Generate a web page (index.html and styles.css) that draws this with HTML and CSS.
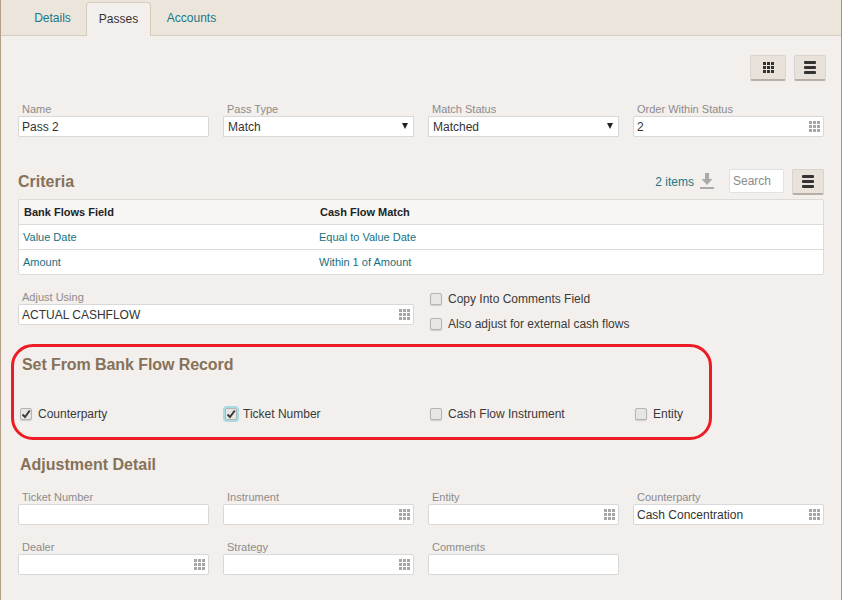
FILE: index.html
```html
<!DOCTYPE html>
<html lang="en">
<head>
<meta charset="utf-8">
<title>Passes</title>
<link rel="stylesheet" href="styles.css">
</head>
<body>
<svg class="defs" width="0" height="0" aria-hidden="true">
  <defs>
    <g id="grid">
      <rect x="0" y="0" width="3" height="3"/><rect x="4" y="0" width="3" height="3"/><rect x="8" y="0" width="3" height="3"/>
      <rect x="0" y="4" width="3" height="3"/><rect x="4" y="4" width="3" height="3"/><rect x="8" y="4" width="3" height="3"/>
      <rect x="0" y="8" width="3" height="3"/><rect x="4" y="8" width="3" height="3"/><rect x="8" y="8" width="3" height="3"/>
    </g>
    <g id="menu">
      <rect x="0" y="0" width="12" height="3" rx="1"/><rect x="0" y="5" width="12" height="3" rx="1"/><rect x="0" y="10" width="12" height="3" rx="1"/>
    </g>
  </defs>
</svg>
<div class="app">
  <nav class="tabs">
    <a class="tab">Details</a>
    <a class="tab active">Passes</a>
    <a class="tab">Accounts</a>
  </nav>
  <main class="content">
    <div class="toolbar">
      <button class="btn btn-wide"><svg width="11" height="11"><use href="#grid"/></svg></button>
      <button class="btn"><svg width="12" height="13"><use href="#menu"/></svg></button>
    </div>

    <div class="grid pass-row">
      <div class="field"><label>Name</label><div class="input">Pass 2</div></div>
      <div class="field"><label>Pass Type</label><div class="input select">Match<span class="caret"></span></div></div>
      <div class="field"><label>Match Status</label><div class="input select">Matched<span class="caret"></span></div></div>
      <div class="field"><label>Order Within Status</label><div class="input">2<svg class="lookup" width="11" height="11"><use href="#grid"/></svg></div></div>
    </div>

    <div class="criteria-head">
      <h2 class="heading criteria-title">Criteria</h2>
      <div class="criteria-tools">
        <span class="count">2 items</span>
        <svg class="download" width="14" height="16" viewBox="0 0 14 16"><path d="M5 0h4v6h3.500L7 12 1.500 6H5z"/><rect y="14" width="14" height="2"/></svg>
        <div class="search">Search</div>
        <button class="btn"><svg width="12" height="13"><use href="#menu"/></svg></button>
      </div>
    </div>

    <div class="table">
      <div class="row head"><span class="col-a">Bank Flows Field</span><span>Cash Flow Match</span></div>
      <div class="row"><span class="col-a">Value Date</span><span>Equal to Value Date</span></div>
      <div class="row"><span class="col-a">Amount</span><span>Within 1 of Amount</span></div>
    </div>

    <div class="adjust">
      <div class="field adjust-field"><label>Adjust Using</label><div class="input">ACTUAL CASHFLOW<svg class="lookup" width="11" height="11"><use href="#grid"/></svg></div></div>
      <div class="checks">
        <div class="check"><span class="box"></span>Copy Into Comments Field</div>
        <div class="check"><span class="box"></span>Also adjust for external cash flows</div>
      </div>
    </div>

    <section class="set-from">
      <div class="ring"></div>
      <h2 class="heading set-title">Set From Bank Flow Record</h2>
      <div class="grid">
        <div class="check"><span class="box on"><svg width="10" height="10" viewBox="0 0 10 10"><path d="M1.500 5.500L4 8l4.800-6.500" /></svg></span>Counterparty</div>
        <div class="check"><span class="box on focus"><svg width="10" height="10" viewBox="0 0 10 10"><path d="M1.500 5.500L4 8l4.800-6.500" /></svg></span>Ticket Number</div>
        <div class="check"><span class="box"></span>Cash Flow Instrument</div>
        <div class="check"><span class="box"></span>Entity</div>
      </div>
    </section>

    <h2 class="heading adj-title">Adjustment Detail</h2>
    <div class="grid adj-grid">
      <div class="field"><label>Ticket Number</label><div class="input"></div></div>
      <div class="field"><label>Instrument</label><div class="input"><svg class="lookup" width="11" height="11"><use href="#grid"/></svg></div></div>
      <div class="field"><label>Entity</label><div class="input"><svg class="lookup" width="11" height="11"><use href="#grid"/></svg></div></div>
      <div class="field"><label>Counterparty</label><div class="input">Cash Concentration<svg class="lookup" width="11" height="11"><use href="#grid"/></svg></div></div>
      <div class="field"><label>Dealer</label><div class="input"><svg class="lookup" width="11" height="11"><use href="#grid"/></svg></div></div>
      <div class="field"><label>Strategy</label><div class="input"><svg class="lookup" width="11" height="11"><use href="#grid"/></svg></div></div>
      <div class="field"><label>Comments</label><div class="input"></div></div>
    </div>
  </main>
</div>
</body>
</html>
```
FILE: styles.css
```css
* { box-sizing: border-box; }
html, body { margin: 0; padding: 0; }
body {
  width: 842px;
  height: 600px;
  overflow: hidden;
  font-family: "Liberation Sans", Arial, sans-serif;
  font-size: 12px;
  color: #333;
}
.defs { position: absolute; }
.app {
  height: 600px;
  background: #f3efec;
  border-left: 1px solid #b09e85;
  border-right: 1px solid #a8967e;
}
.tabs {
  display: flex;
  height: 36px;
  padding: 2px 0 0 18px;
  background: #ece5dc;
  border-bottom: 1px solid #d8cdbc;
}
.tab {
  height: 34px;
  line-height: 33px;
  text-align: center;
  color: #17798a;
}
.tab:nth-child(1) { width: 67px; }
.tab:nth-child(3) { width: 81px; }
.tab.active {
  width: 65px;
  background: #f3efec;
  border: 1px solid #d8cdbc;
  border-bottom: 0;
  border-radius: 4px 4px 0 0;
  color: #333;
}
.content { padding: 19px 17px 0 17px; }
.toolbar {
  display: flex;
  justify-content: flex-end;
  gap: 8px;
  margin-right: -2px;
}
.btn {
  display: flex;
  align-items: center;
  justify-content: center;
  width: 32px;
  height: 26px;
  padding: 0;
  background: #e8e2db;
  border: 1px solid #d9d4cd;
  border-bottom: 2px solid #b5afa6;
  border-radius: 2px;
  fill: #333;
}
.btn-wide { width: 36px; }
.grid {
  display: grid;
  grid-template-columns: repeat(4, 191px);
  column-gap: 14px;
}
.pass-row { margin-top: 22px; }
.field label {
  display: block;
  height: 13px;
  line-height: 13px;
  padding-left: 4px;
  font-size: 11px;
  color: #8c8c8c;
}
.input {
  position: relative;
  height: 21px;
  line-height: 21px;
  padding-left: 3px;
  background: #fff;
  border: 1px solid #d8d8d8;
  border-radius: 2px;
  color: #333;
}
.select { padding-left: 4px; border-radius: 0; }
.caret {
  position: absolute;
  right: 5px;
  top: 6px;
  border-left: 3.500px solid transparent;
  border-right: 3.500px solid transparent;
  border-top: 6px solid #222;
}
.lookup {
  position: absolute;
  right: 3px;
  top: 4px;
  fill: #a6a6a6;
}
.criteria-head {
  display: flex;
  justify-content: space-between;
  align-items: center;
  margin-top: 32px;
  height: 28px;
}
.heading {
  margin: 0;
  font-size: 16px;
  line-height: 20px;
  font-weight: bold;
  color: #857259;
}
.criteria-title { margin-bottom: 2px; }
.criteria-tools {
  display: flex;
  align-items: flex-start;
  height: 28px;
}
.count { margin: 6px 0 0 -1px; line-height: 14px; color: #17798a; }
.download { margin: 4px 0 0 6px; fill: #a9a9a9; }
.search {
  width: 55px;
  height: 24px;
  margin: 0 8px 0 15px;
  padding-left: 3px;
  line-height: 22px;
  background: #fff;
  border: 1px solid #e2e2e2;
  border-radius: 2px;
  color: #8a8a8a;
}
.table {
  margin-top: 2px;
  background: #fff;
  border: 1px solid #dedbd7;
  border-radius: 2px;
  font-size: 11px;
  color: #17707f;
}
.row {
  display: flex;
  height: 25px;
  line-height: 24px;
  padding-left: 4px;
  border-top: 1px solid #dedbd7;
}
.row.head {
  height: 24px;
  border-top: 0;
  background: #f8f6f4;
  color: #222;
  font-weight: bold;
  padding-left: 5px;
}
.col-a { width: 296px; }
.adjust {
  display: flex;
  margin-top: 16px;
}
.adjust-field { width: 396px; }
.checks {
  display: flex;
  flex-direction: column;
  gap: 7px;
  margin: -1px 0 0 14px;
}
.check {
  display: flex;
  align-items: center;
  height: 18px;
  color: #3a3a3a;
}
.box {
  display: flex;
  align-items: center;
  justify-content: center;
  width: 12px;
  height: 12px;
  margin: 0 6px 0 2px;
  background: #e8e6e3;
  border: 1px solid #b4b4b4;
  border-radius: 2px;
  box-shadow: 0 1px 1px #d0cdc9;
}
.box svg { fill: none; stroke: #3a3a3a; stroke-width: 2; }
.box.focus { box-shadow: 0 0 0 2px #a6dbe2; }
.set-from {
  position: relative;
  margin-top: 13px;
  height: 94px;
}
.ring {
  position: absolute;
  left: -7px;
  top: -2px;
  width: 701px;
  height: 96px;
  border: 3px solid #ed1c24;
  border-radius: 22px;
  pointer-events: none;
}
.set-title { padding: 9px 0 0 4px; height: 59px; letter-spacing: -0.08px; }
.adj-title { margin-top: 15px; padding-left: 2px; }
.adj-grid { margin-top: 16px; row-gap: 16px; }
```
